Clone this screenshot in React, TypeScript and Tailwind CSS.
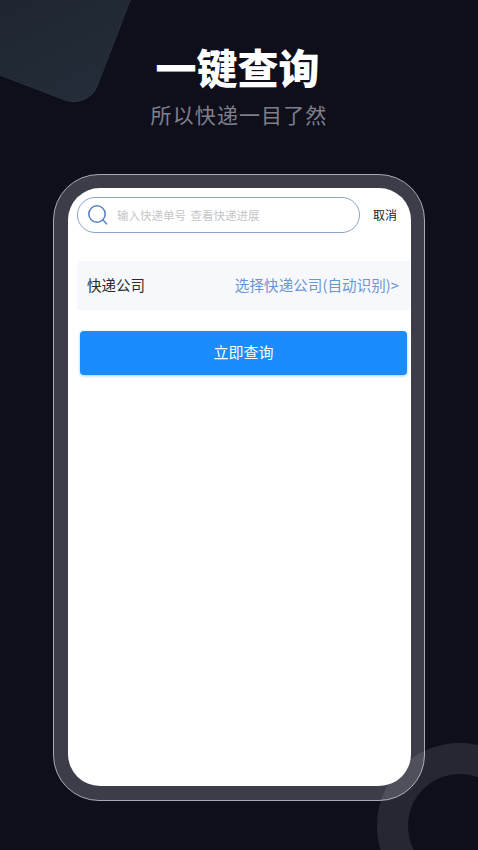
export default function App() {
  const cjk = { fontFamily: '"Noto Sans CJK SC", "Noto Sans", sans-serif' };
  return (
    <div style={cjk} className="relative w-[478px] h-[850px] overflow-hidden bg-[#0f0f1c] flex flex-col items-center">
      <div className="absolute left-[-44px] top-[-103px] w-[172px] h-[188px] rotate-[21deg] rounded-[26px] border border-[#2c3642] bg-gradient-to-br from-[#1a202c] to-[#242d39]" />
      <h1 className="relative mt-[38px] -ml-[3px] h-[56px] text-[41px] leading-[56px] font-black text-white">一键查询</h1>
      <p className="relative mt-[4px] h-[32px] text-[21px] leading-[32px] text-[#7f7f8b] tracking-[1.1px]">所以快递一目了然</p>
      <div className="mt-[44px] w-[372px] h-[627px] rounded-[46px] border border-[#a9a9b4] bg-[#3d3c49] pl-[14px] pr-[13px] pt-[13px] pb-[14px]">
        <div className="h-[598px] rounded-[32px] bg-white flex flex-col pl-[9px] pr-0 pt-[9px]">
          <div className="flex items-center h-[36px]">
            <div className="w-[283px] h-[36px] rounded-full border border-[#8aa3c7] flex items-center pl-[9px]">
              <svg width="22" height="22" viewBox="0 0 22 22" fill="none" stroke="#5b84c4" strokeWidth="1.6" strokeLinecap="round">
                <circle cx="10" cy="10" r="8.2" />
                <path d="M16.2 16.2 L19.6 19.8" />
              </svg>
              <span className="ml-[8px] -mt-[1px] text-[11.5px] leading-[16px] text-[#c6c6c8] whitespace-pre [word-spacing:2px]">输入快递单号 查看快递进展</span>
            </div>
            <span className="ml-[13px] -mt-[1px] text-[12px] leading-[16px] text-[#222222]">取消</span>
          </div>
          <div className="mt-[28px] w-[333px] h-[49px] bg-[#f7f8fb] flex items-center justify-between pl-[10px] pr-[11px]">
            <span className="-mt-[2px] text-[14.5px] text-[#2b2b2b]">快递公司</span>
            <span className="-mt-[2px] text-[14.5px] tracking-[0.1px] text-[#6b94d6]">选择快递公司(自动识别)&gt;</span>
          </div>
          <button className="mt-[21px] ml-[3px] w-[327px] h-[44px] rounded-[4px] bg-[#1a8cfb] text-white text-[15px] pb-[2px] shadow-[0_1px_3px_rgba(26,140,251,0.45)]">立即查询</button>
        </div>
      </div>
      <div className="absolute left-[377px] top-[743px] w-[166px] h-[166px] rounded-full border-[31px] border-white/10" />
    </div>
  );
}
